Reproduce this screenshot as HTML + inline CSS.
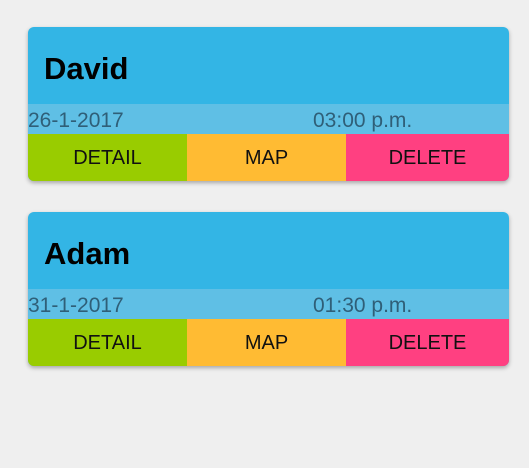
<!DOCTYPE html><html><head><style>
body{margin:0;background:#efefef;width:529px;height:468px;font-family:"Liberation Sans",sans-serif;position:relative;overflow:hidden}
.card{position:absolute;left:28px;width:481px;height:154px;border-radius:6px;overflow:hidden;box-shadow:0 2px 4px rgba(0,0,0,.3);background:#33b5e5}
.h{height:77px;font-weight:bold;font-size:31px;line-height:84px;padding-left:16px;color:#000}
.d{height:30px;background:#5fbfe5;color:#2f5f78;font-size:21px;line-height:33px;position:relative}
.d span{position:absolute;left:285px}
.b{display:flex;height:47px;font-size:20px;line-height:49px;text-align:center;color:#111}
.b div:nth-child(1){width:159px;background:#99cc00}
.b div:nth-child(2){width:159px;background:#ffbb33}
.b div:nth-child(3){flex:1;background:#ff4081}
</style></head><body>
<div class="card" style="top:27px"><div class="h">David</div><div class="d">26-1-2017<span>03:00 p.m.</span></div><div class="b"><div>DETAIL</div><div>MAP</div><div>DELETE</div></div></div>
<div class="card" style="top:212px"><div class="h">Adam</div><div class="d">31-1-2017<span>01:30 p.m.</span></div><div class="b"><div>DETAIL</div><div>MAP</div><div>DELETE</div></div></div>
</body></html>
